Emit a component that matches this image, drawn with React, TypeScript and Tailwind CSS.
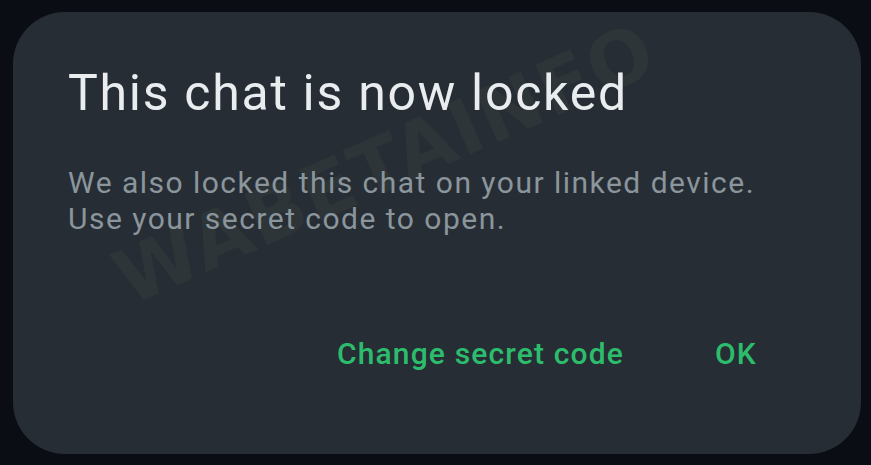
import React from "react";

export default function App() {
  return (
    <div className="w-[871px] h-[465px] bg-[#0a0e14] pt-[12px] pl-[13px] overflow-hidden" style={{ fontFamily: "Roboto, 'Noto Sans', sans-serif" }}>
      <div className="relative w-[848px] h-[442px] rounded-[52px] bg-[#272d34] overflow-hidden">
        <div className="absolute left-[372px] top-[152px] -translate-x-1/2 -translate-y-1/2 -rotate-[24deg] whitespace-nowrap text-[76px] font-black tracking-[2px] text-[#2e3538] select-none leading-none" style={{ fontFamily: "'DejaVu Sans', sans-serif" }}>
          WABETAINFO
        </div>
        <div className="relative pl-[55px] pt-[52px]">
          <h1 className="text-[50px] leading-[58px] text-[#e9edef] font-normal tracking-[1.72px] whitespace-nowrap">This chat is now locked</h1>
          <p className="mt-[43px] text-[30px] leading-[36px] text-[#8a959c] tracking-[1.48px] whitespace-nowrap">
            We also locked this chat on your linked device.
            <br />
            Use your secret code to open.
          </p>
        </div>
        <div className="relative flex justify-end items-center gap-[91px] pr-[104px] mt-[94px]">
          <span className="text-[30px] font-medium text-[#2cbd6c] tracking-[1.15px]">Change secret code</span>
          <span className="text-[30px] font-medium text-[#2cbd6c] tracking-[1.2px]">OK</span>
        </div>
      </div>
    </div>
  );
}
